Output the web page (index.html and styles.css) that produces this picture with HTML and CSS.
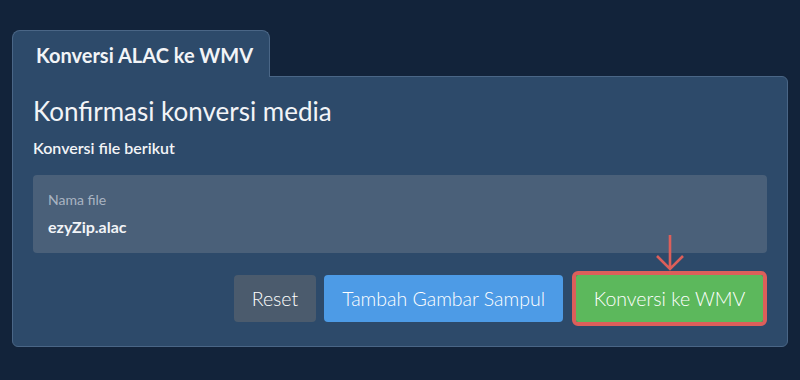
FILE: index.html
```html
<!DOCTYPE html>
<html lang="id">
<head>
<meta charset="UTF-8">
<meta name="viewport" content="width=device-width, initial-scale=1">
<link rel="stylesheet" href="styles.css">
</head>
<body>

<div class="page">
    <!-- tab header -->
    <div class="tab">Konversi ALAC ke WMV</div>

    <!-- panel -->
    <div class="panel">
        <h2 class="panel-title">Konfirmasi konversi media</h2>
        <p class="panel-sub">Konversi file berikut</p>

        <div class="file-box">
            <div class="file-label">Nama file</div>
            <div class="file-name">ezyZip.alac</div>
        </div>

        <div class="actions">
            <button class="btn btn-reset">Reset</button>
            <button class="btn btn-blue">Tambah Gambar Sampul</button>
            <span class="highlight">
                <svg class="arrow" width="30" height="36" viewBox="0 0 30 36">
                    <path d="M15 0 V34 M2 21 L15 34 L28 21" fill="none" stroke="#dc5f5a" stroke-width="2.6"/>
                </svg>
                <button class="btn btn-green">Konversi ke WMV</button>
            </span>
        </div>
    </div>
</div>

</body>
</html>
```

FILE: styles.css
```css
html, body {
    margin: 0;
    height: 100%;
    font-family: Lato, "Noto Sans", sans-serif;
}

body {
    background-color: #12233a;
    color: #f2f4f7;
}

.page {
    padding: 30px 12px 0 12px;
}

.tab {
    display: inline-block;
    box-sizing: border-box;
    width: 258px;
    height: 47px;
    padding: 12px 0 0 23px;
    background-color: #2d4a6a;
    border: 1px solid #4a6686;
    border-bottom: none;
    border-radius: 8px 8px 0 0;
    font-size: 20px;
    font-weight: bold;
    line-height: 1.2;
    position: relative;
    z-index: 1;
    margin-bottom: -1px;
}

.panel {
    background-color: #2d4a6a;
    border: 1px solid #4a6686;
    border-radius: 0 6px 6px 6px;
    padding: 19px 20px 20px 20px;
}

.panel-title {
    margin: 0;
    font-size: 26px;
    font-weight: normal;
    line-height: 1.2;
}

.panel-sub {
    margin: 11px 0 0 0;
    font-size: 16px;
    font-weight: 600;
    line-height: 1.2;
}

.file-box {
    margin-top: 18px;
    background-color: #4a6079;
    border-radius: 4px;
    padding: 17px 15px 17px 15px;
}

.file-label {
    font-size: 14px;
    line-height: 1.2;
    color: #a9b4c2;
}

.file-name {
    margin-top: 8px;
    font-size: 16px;
    font-weight: bold;
    line-height: 1.2;
}

.actions {
    display: flex;
    justify-content: flex-end;
    align-items: center;
    gap: 8px;
    margin-top: 18px;
}

.btn {
    font-family: inherit;
    font-size: 19.5px;
    font-weight: 300;
    color: #ffffff;
    border: none;
    border-radius: 4px;
    height: 47px;
    padding: 0 18px;
    white-space: nowrap;
    cursor: pointer;
}

.btn-reset {
    background-color: #4b5b6d;
}

.btn-blue {
    background-color: #4d9be6;
}

.btn-green {
    display: block;
    background-color: #5cb85c;
    border-radius: 2px;
    width: 187px;
    padding: 0;
}

.highlight {
    position: relative;
    margin-left: 1px;
    border: 4px solid #dc5f5a;
    border-radius: 6px;
}

.arrow {
    position: absolute;
    left: 50%;
    top: -40px;
    margin-left: -15px;
}
```
